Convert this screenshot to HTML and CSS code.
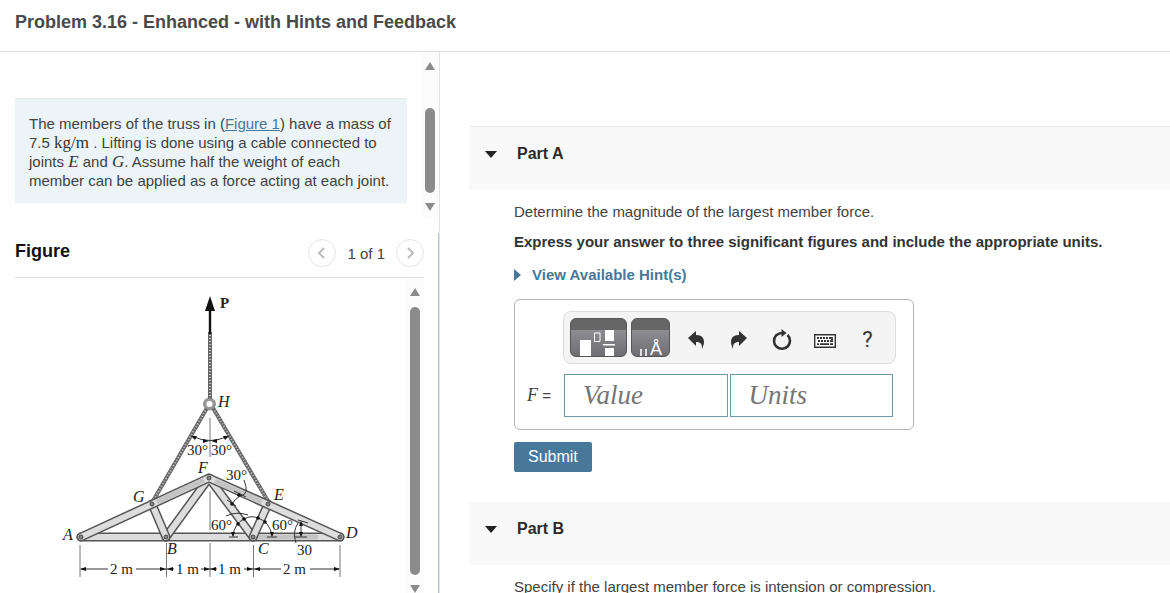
FILE: index.html
```html
<!DOCTYPE html>
<html lang="en">
<head>
<meta charset="utf-8">
<title>Problem 3.16</title>
<link rel="stylesheet" href="styles.css">
</head>
<body>
<header class="page-header"><h1>Problem 3.16 - Enhanced - with Hints and Feedback</h1></header>
<main class="layout">
  <div class="left">
    <section class="problem">
      <div class="problem-body">
        <p class="statement">The members of the truss in (<a href="#figure">Figure 1</a>) have a mass of 7.5 <span class="math">kg/m</span> . Lifting is done using a cable connected to joints <i class="math">E</i> and <i class="math">G</i>. Assume half the weight of each member can be applied as a force acting at each joint.</p>
      </div>
      <div class="scrollbar"><span class="up"></span><span class="thumb short"></span><span class="down"></span></div>
    </section>
    <section class="figure" id="figure">
      <div class="figure-head">
        <h2>Figure</h2>
        <div class="pager">
          <button type="button" aria-label="Previous figure"><svg width="12" height="14" viewBox="0 0 12 14"><path d="M8 2 3 7l5 5"/></svg></button>
          <span>1 of 1</span>
          <button type="button" aria-label="Next figure"><svg width="12" height="14" viewBox="0 0 12 14"><path d="M4 2l5 5-5 5"/></svg></button>
        </div>
      </div>
      <div class="figure-body">
        <svg class="truss" viewBox="15 278 391 315" role="img" aria-label="Truss lifted by a cable">
          <!-- hoisting cable -->
          <path class="cable" d="M210 332V400"/><path class="strand" d="M210 332V400"/>
          <path class="cable" d="M207 408L153 501M213 408L268 501"/><path class="strand" d="M207 408L153 501M213 408L268 501"/>
          <path d="M210 334V305" stroke="#111" stroke-width="2.4"/><path class="solid" d="M210 296l5 15h-10z"/>
          <circle cx="209.500" cy="404" r="4.500" fill="#fff" stroke="#999" stroke-width="3"/>
          <circle cx="209.500" cy="404" r="6" fill="none" stroke="#666" stroke-width=".6"/>
          <!-- centre line and 30 degree arcs -->
          <path class="thin" d="M210 418V457M210 491V530"/>
          <path class="thin dark" d="M194 437q16 7 32 0"/>
          <path class="solid" d="M191 436l6 0-2 4zM229 436l-6 0 2 4zM209 441l-6-2v4zM211 441l6-2v4z"/>
          <!-- members -->
          <g class="edge"><path d="M81 537H340"/></g><g class="bar"><path d="M81 537H340"/></g>
          <g class="shade"><path d="M257 537H318"/></g>
          <g class="edge"><path d="M166 537L209 478L253 537"/></g><g class="bar"><path d="M166 537L209 478L253 537"/></g>
          <g class="edge"><path d="M152 504L166 537M268 504L253 537"/></g><g class="bar"><path d="M152 504L166 537M268 504L253 537"/></g>
          <g class="edge"><path d="M81 537L209 478L340 537"/></g><g class="bar"><path d="M81 537L209 478L340 537"/></g>
          <g class="shade"><path d="M157 502L204 480M215 481L262 502"/></g>
          <g class="pin"><circle cx="81" cy="537" r="2"/><circle cx="166" cy="537" r="2"/><circle cx="253" cy="537" r="2"/><circle cx="340" cy="537" r="2"/><circle cx="209" cy="478" r="2"/><circle cx="152" cy="504" r="2"/><circle cx="268" cy="504" r="2"/></g>
          <!-- angle marks -->
          <g class="thin dark">
            <path d="M244 480q6 15-4 16-5 3-8 8M234 491l12 6M227 500l9 6"/>
            <path d="M226 516q10-5 22-1M233 536q1-12 11-17 7-4 14-1 12 4 14 18M229 537h9M267 537h10"/>
            <path d="M295 537h12M301 536v-14M298 520l10 3M298 523q-6 9-2 20"/>
          </g>
          <g class="solid"><circle cx="239" cy="495" r="1.800"/><circle cx="232" cy="504" r="1.800"/><circle cx="244" cy="519" r="1.800"/><circle cx="238" cy="524" r="1.800"/><circle cx="258" cy="518" r="1.800"/><circle cx="265" cy="522" r="1.800"/><path d="M233 537l-2-5h4zM272 537l-2-5h4zM301 537l-2-5h4zM301 521l-2 5h4z"/></g>
          <!-- dimensions -->
          <path class="thin" d="M80 545V577M166.500 543V577M210 543V577M253.500 545V577M340 545V577"/>
          <path class="thin dark" d="M81 569H108M136 569H174M201 569H217M244 569H281M310 569H339"/>
          <path class="solid" d="M80 569l6-2v4zM166 569l-6-2v4zM167 569l6-2v4zM210 569l-6-2v4zM210 569l6-2v4zM253 569l-6-2v4zM254 569l6-2v4zM340 569l-6-2v4z"/>
          <g class="num"><text x="110" y="574">2 m</text><text x="176" y="574">1 m</text><text x="218" y="574">1 m</text><text x="283" y="574">2 m</text>
          <text x="187" y="455">30°</text><text x="211" y="455">30°</text><text x="226" y="480">30°</text><text x="211" y="530">60°</text><text x="272" y="530">60°</text><text x="297" y="555">30</text></g>
          <g class="joint"><text x="63" y="540">A</text><text x="167" y="554">B</text><text x="258" y="554">C</text><text x="346" y="538">D</text><text x="274" y="500">E</text><text x="198" y="473">F</text><text x="133" y="502">G</text><text x="218" y="407">H</text></g>
          <text class="force" x="220" y="308">P</text>
        </svg>
        <div class="scrollbar"><span class="up"></span><span class="thumb"></span><span class="down"></span></div>
      </div>
    </section>
  </div>
  <div class="right">
    <section>
      <div class="part-head first"><span class="caret"></span><h2>Part A</h2></div>
      <div class="part-body">
        <p>Determine the magnitude of the largest member force.</p>
        <p class="strong">Express your answer to three significant figures and include the appropriate units.</p>
        <button type="button" class="hint"><span class="hint-caret"></span>View Available Hint(s)</button>
        <form class="answer">
          <div class="answer-box">
            <div class="toolbar">
              <button type="button" class="tile wide" aria-label="Templates"><svg width="55" height="37" viewBox="0 0 55 37"><path fill="#fff" d="M9 21h11v16H9zM34 11h9v11h-9zM34 29h9v8h-9zM32 25h12v1.500H32z"/><path fill="none" stroke="#fff" d="M23.500 14h5.500v8.500h-5.500z"/></svg></button>
              <button type="button" class="tile narrow" aria-label="Symbols"><svg width="37" height="37" viewBox="0 0 37 37"><path d="M9 30v7M14 30v7" stroke="#fff" stroke-width="1.600"/><text x="18" y="36">Å</text></svg></button>
              <button type="button" class="tool" aria-label="Undo"><svg width="20" height="20" viewBox="0 0 20 20"><path fill="#333" d="M2 8l8-7v4c8 0 10 6 6 14 0-5-1-7-6-7v4z"/></svg></button>
              <button type="button" class="tool" aria-label="Redo"><svg width="20" height="20" viewBox="0 0 20 20"><path fill="#333" d="M18 8l-8-7v4C2 5 0 11 4 19c0-5 1-7 6-7v4z"/></svg></button>
              <button type="button" class="tool" aria-label="Reset"><svg width="22" height="22" viewBox="0 0 22 22"><path fill="none" stroke="#333" stroke-width="2.600" d="M16.500 6A8 8 0 1 1 5 6.500Q8 3.800 12 4"/><path fill="#333" d="M10.500 0l5 4-5 4z"/></svg></button>
              <button type="button" class="tool" aria-label="Keyboard"><svg width="22" height="20" viewBox="0 2 22 20"><path fill="#fff" stroke="#333" stroke-width="1.400" d="M.7 6.700h20.600v12.600H.7z"/><path fill="none" stroke="#333" stroke-width="1.800" stroke-dasharray="2 1" d="M3 10h14M4 13h13"/><path stroke="#333" stroke-width="1.800" d="M3 16.200h2M6 16.200h9M16 16.200h3M18 9v5"/></svg></button>
              <button type="button" class="tool help" aria-label="Help">?</button>
            </div>
            <label for="value"><i>F</i> =</label>
            <div class="fields">
              <input id="value" type="text" placeholder="Value">
              <input type="text" placeholder="Units" aria-label="Units">
            </div>
          </div>
          <button type="submit" class="submit">Submit</button>
        </form>
      </div>
    </section>
    <section>
      <div class="part-head"><span class="caret"></span><h2>Part B</h2></div>
      <div class="part-body"><p>Specify if the largest member force is intension or compression.</p></div>
    </section>
  </div>
</main>
</body>
</html>
```
FILE: styles.css
```css
* { box-sizing: border-box; }
body {
  margin: 0;
  height: 100vh;
  display: flex;
  flex-direction: column;
  overflow: hidden;
  background: #fff;
  color: #424242;
  font: 15px/20px "Liberation Sans", Arial, sans-serif;
}
h1, h2, p { margin: 0; }
button { font: inherit; padding: 0; border: 0; background: none; }
.page-header { padding: 10px 15px 17px; border-bottom: 1px solid #ddd; }
.page-header h1 { font-size: 18px; line-height: 24px; color: #4a4a4a; }
.layout { flex: 1; min-height: 0; display: grid; grid-template-columns: minmax(0, 440px) minmax(0, 1fr); }

.left { display: flex; flex-direction: column; min-height: 0; border-right: 1px solid #dfe3e7; }
.problem { display: flex; }
.problem-body { flex: 1; padding: 46px 14px 16px 15px; }
.statement { padding: 15px 14px 13px; border-top: 1px solid #e4ebee; background: #ecf4f8; line-height: 19px; }
.statement a { color: #47789a; }
.math { font-family: "Liberation Serif", serif; font-size: 17px; line-height: 17px; color: #333; }

.scrollbar { width: 18px; padding: 10px 0 8px; display: flex; flex-direction: column; align-items: center; justify-content: space-between; background: #fcfcfc; }
.up, .down { border: 5px solid transparent; width: 0; }
.up { border-top: 0; border-bottom: 8px solid #8b8b8b; }
.down { border-bottom: 0; border-top: 8px solid #8b8b8b; }
.thumb { width: 10px; flex: 1; margin: 11px 0 10px; border-radius: 5px; background: #8b8b8b; }
.thumb.short { margin-top: 38px; }

.figure { flex: 1; min-height: 0; margin-top: 14px; padding: 0 14px 0 15px; display: flex; flex-direction: column; border-right: 1px solid #bdc6ce; }
.figure-head { display: flex; align-items: center; justify-content: space-between; padding: 6px 0 10px; border-bottom: 1px solid #ddd; }
.figure-head h2 { padding-bottom: 4px; font-size: 18px; line-height: 24px; color: #111; }
.pager { display: flex; align-items: center; gap: 11px; }
.pager span { padding-top: 2px; }
.pager button { width: 28px; height: 28px; display: grid; place-items: center; border: 1px solid #e4e4e4; border-radius: 50%; }
.pager path { fill: none; stroke: #bbb; stroke-width: 2; }
.figure-body { flex: 1; min-height: 0; display: flex; }
.figure-body .scrollbar { padding-bottom: 0; }
.truss { flex: 1; min-width: 0; height: 315px; font-family: "Liberation Serif", serif; fill: #222; }
.cable { stroke: #666; stroke-width: 4; fill: none; }
.strand { stroke: #ccc; stroke-width: 2; stroke-dasharray: 1 2; fill: none; }
.thin { stroke: #777; stroke-width: 1; fill: none; }
.dark { stroke: #333; }
.edge { stroke: #555; stroke-width: 9; fill: none; stroke-linecap: round; stroke-linejoin: round; }
.bar { stroke: #ddd; stroke-width: 6; fill: none; stroke-linecap: round; stroke-linejoin: round; }
.shade { stroke: #c4c4c4; stroke-width: 5; }
.pin { fill: #888; stroke: #444; }
.solid { fill: #111; }
.num { font-size: 15px; }
.joint { font-size: 16px; font-style: italic; }
.force { font-size: 15px; font-weight: bold; }

.right { min-width: 0; padding: 74px 0 0 29px; overflow: hidden; }
.part-head { display: flex; align-items: center; gap: 20px; padding: 17px 16px 26px; background: #f9f9f9; }
.part-head.first { border-top: 1px solid #e8e8e8; }
.part-head h2 { font-size: 16px; line-height: 20px; color: #2b2b2b; }
.caret { border: 6px solid transparent; border-top: 7px solid #222; border-bottom: 0; }
.part-body { padding: 12px 16px 30px 45px; }
.strong { margin-top: 10px; font-weight: bold; color: #333; }
.hint { display: flex; align-items: center; gap: 11px; margin: 13px 0 14px; font-weight: bold; color: #47789a; }
.hint-caret { border: 6px solid transparent; border-left: 7px solid #47789a; border-right: 0; }
.answer-box {
  width: 100%;
  max-width: 400px;
  display: grid;
  grid-template-columns: 26px minmax(0, 1fr);
  gap: 10px;
  align-items: center;
  padding: 11px 17px 12px 12px;
  border: 1px solid #b3b3b3;
  border-radius: 6px;
}
.toolbar { grid-column: 2; display: flex; align-items: center; padding: 6px; border: 1px solid #ddd; border-radius: 8px; background: #f4f4f4; }
.tile { height: 39px; margin-right: 4px; border: 1px solid #555; border-radius: 6px; overflow: hidden; background: linear-gradient(#666 0 11px, #8d8d92 11px, #6d6d72); }
.tile svg { display: block; }
.tile text { font: 18px "Liberation Sans", sans-serif; fill: #fff; }
.wide { width: 57px; }
.narrow { width: 39px; }
.tool { width: 43px; height: 39px; padding-top: 4px; display: grid; place-items: center; }
.help { font: 22px/22px Roboto, sans-serif; color: #333; }
.answer label { font-size: 15px; white-space: nowrap; }
.answer label i { font-family: "Liberation Serif", serif; font-size: 18px; }
.fields { display: flex; gap: 2px; padding: 0 3px 0 1px; }
.fields input { flex: 1; min-width: 0; height: 43px; padding: 0 18px; border: 1px solid #6f98ad; font: italic 27px "Liberation Serif", serif; }
.fields input::placeholder { color: #757575; }
.submit { margin-top: 12px; padding: 5px 14px; border-radius: 2px; font-size: 16px; background: #47789a; color: #fff; }
```
